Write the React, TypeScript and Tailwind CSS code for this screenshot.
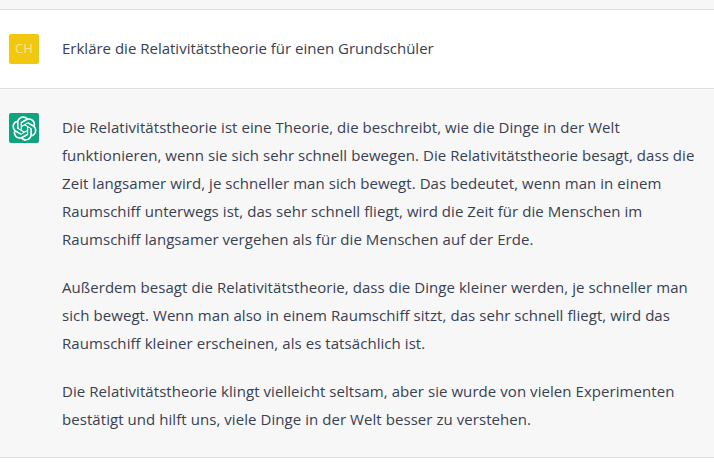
import React from "react";

const LOGO =
  "M37.5324 16.8707C37.9808 15.5241 38.1363 14.0974 37.9886 12.6859C37.8409 11.2744 37.3934 9.91076 36.676 8.68622C35.6126 6.83404 33.9882 5.3676 32.0373 4.4985C30.0864 3.62941 27.9098 3.40259 25.8215 3.85078C24.8796 2.7893 23.7219 1.94125 22.4257 1.36341C21.1295 0.785575 19.7249 0.491269 18.3058 0.500197C16.1708 0.495044 14.0893 1.16803 12.3614 2.42214C10.6335 3.67624 9.34853 5.44666 8.6917 7.47815C7.30085 7.76286 5.98686 8.3414 4.8377 9.17505C3.68854 10.0087 2.73073 11.0782 2.02839 12.312C0.956464 14.1591 0.498905 16.2988 0.721698 18.4228C0.944492 20.5467 1.83612 22.5449 3.268 24.1293C2.81966 25.4759 2.66413 26.9026 2.81182 28.3141C2.95951 29.7256 3.40701 31.0892 4.12437 32.3138C5.18791 34.1659 6.8123 35.6322 8.76321 36.5013C10.7141 37.3704 12.8907 37.5973 14.9789 37.1492C15.9208 38.2107 17.0786 39.0587 18.3747 39.6366C19.6709 40.2144 21.0755 40.5087 22.4946 40.4998C24.6307 40.5054 26.7133 39.8321 28.4418 38.5772C30.1704 37.3223 31.4556 35.5506 32.1119 33.5179C33.5027 33.2332 34.8167 32.6547 35.9659 31.821C37.115 30.9874 38.0728 29.9178 38.7752 28.684C39.8458 26.8371 40.3023 24.6979 40.0789 22.5748C39.8556 20.4517 38.9639 18.4544 37.5324 16.8707ZM22.4978 37.8849C20.7443 37.8874 19.0459 37.2733 17.6994 36.1501C17.7601 36.117 17.8666 36.0586 17.936 36.0161L25.9004 31.4156C26.1003 31.3019 26.2663 31.137 26.3813 30.9378C26.4964 30.7386 26.5563 30.5124 26.5549 30.2825V19.0542L29.9213 20.998C29.9389 21.0068 29.9541 21.0198 29.9656 21.0359C29.977 21.052 29.9842 21.0707 29.9867 21.0902V30.3889C29.9842 32.375 29.1946 34.2791 27.7909 35.6841C26.3872 37.0892 24.4838 37.8806 22.4978 37.8849ZM6.39227 31.0064C5.51397 29.4888 5.19742 27.7107 5.49804 25.9832C5.55718 26.0187 5.66048 26.0818 5.73461 26.1244L13.699 30.7248C13.8975 30.8408 14.1233 30.902 14.3532 30.902C14.583 30.902 14.8088 30.8408 15.0073 30.7248L24.731 25.1103V28.9979C24.7321 29.0177 24.7283 29.0376 24.7199 29.0556C24.7115 29.0736 24.6988 29.0893 24.6829 29.1012L16.6317 33.7497C14.9096 34.7416 12.8643 35.0097 10.9447 34.4954C9.02506 33.9811 7.38785 32.7263 6.39227 31.0064ZM4.29707 13.6194C5.17156 12.0998 6.55279 10.9364 8.19885 10.3327C8.19885 10.4013 8.19491 10.5228 8.19491 10.6071V19.808C8.19351 20.0378 8.25334 20.2638 8.36823 20.4629C8.48312 20.6619 8.64893 20.8267 8.84863 20.9404L18.5723 26.5542L15.206 28.4979C15.1894 28.5089 15.1703 28.5155 15.1505 28.5173C15.1307 28.5191 15.1107 28.516 15.0924 28.5082L7.04046 23.8557C5.32135 22.8601 4.06716 21.2235 3.55289 19.3046C3.03862 17.3858 3.30624 15.3413 4.29707 13.6194ZM31.955 20.0556L22.2312 14.4411L25.5976 12.4981C25.6142 12.4872 25.6333 12.4805 25.6531 12.4787C25.6729 12.4769 25.6928 12.4801 25.7111 12.4879L33.7631 17.1364C34.9967 17.849 36.0017 18.8982 36.6606 20.1613C37.3194 21.4244 37.6047 22.849 37.4832 24.2684C37.3617 25.6878 36.8382 27.0432 35.9743 28.1759C35.1103 29.3086 33.9415 30.1717 32.6047 30.6641C32.6047 30.5947 32.6047 30.4733 32.6047 30.3889V21.188C32.6066 20.9586 32.5474 20.7328 32.4332 20.5338C32.319 20.3348 32.154 20.1698 31.955 20.0556ZM35.3055 15.0128C35.2464 14.9765 35.1431 14.9142 35.069 14.8717L27.1045 10.2712C26.906 10.1554 26.6803 10.0943 26.4504 10.0943C26.2206 10.0943 25.9948 10.1554 25.7963 10.2712L16.0726 15.8858V11.9982C16.0715 11.9783 16.0753 11.9585 16.0837 11.9405C16.0921 11.9225 16.1048 11.9068 16.1207 11.8949L24.1719 7.25025C25.4053 6.53903 26.8158 6.19376 28.2383 6.25482C29.6608 6.31589 31.0364 6.78077 32.2044 7.59508C33.3723 8.40939 34.2842 9.53945 34.8334 10.8531C35.3826 12.1667 35.5464 13.6095 35.3055 15.0128ZM14.2424 21.9419L10.8752 19.9981C10.8576 19.9893 10.8423 19.9763 10.8309 19.9602C10.8195 19.9441 10.8122 19.9254 10.8098 19.9058V10.6071C10.8107 9.18295 11.2173 7.78848 11.9819 6.58696C12.7466 5.38544 13.8377 4.42659 15.1275 3.82264C16.4173 3.21869 17.8524 2.99464 19.2649 3.1767C20.6775 3.35876 22.0089 3.93941 23.1034 4.85067C23.0427 4.88379 22.937 4.94215 22.8668 4.98473L14.9024 9.58517C14.7025 9.69878 14.5366 9.86356 14.4215 10.0626C14.3065 10.2616 14.2466 10.4877 14.2479 10.7175L14.2424 21.9419ZM16.071 17.9991L20.4018 15.4978L24.7325 17.9975V22.9985L20.4018 25.4983L16.071 22.9985V17.9991Z";

const Line = ({ children }: { children: string }) => (
  <div className="whitespace-nowrap">{children}</div>
);

export default function App() {
  return (
    <div className="h-[474px] w-[714px] overflow-hidden bg-white font-['Open_Sans',sans-serif] text-[15px] text-[#374151]">
      <div className="h-[10px] border-b border-[#e0e0e2] bg-[#f7f7f8]" />

      <div className="flex h-[79px] gap-[23px] border-b border-[#e0e0e2] pl-[9px] pt-[24px]">
        <div className="flex h-[30px] w-[30px] items-center justify-center rounded-[2px] bg-[#f2c80f] text-[13px] text-[#f9e58c]">
          CH
        </div>
        <div className="leading-[28px]">Erkläre die Relativitätstheorie für einen Grundschüler</div>
      </div>

      <div className="flex h-[369px] gap-[23px] border-b border-[#e0e0e2] bg-[#f7f7f8] pl-[9px] pt-[24px]">
        <div className="flex h-[30px] w-[30px] shrink-0 items-center justify-center rounded-[2px] bg-[#10a37f]">
          <svg width="25" height="25" viewBox="0 0 41 41" fill="white">
            <path d={LOGO} />
          </svg>
        </div>
        <div className="flex flex-col gap-[20px] leading-[28px] tracking-[0.06px]">
          <div>
            <Line>Die Relativitätstheorie ist eine Theorie, die beschreibt, wie die Dinge in der Welt</Line>
            <Line>funktionieren, wenn sie sich sehr schnell bewegen. Die Relativitätstheorie besagt, dass die</Line>
            <Line>Zeit langsamer wird, je schneller man sich bewegt. Das bedeutet, wenn man in einem</Line>
            <Line>Raumschiff unterwegs ist, das sehr schnell fliegt, wird die Zeit für die Menschen im</Line>
            <Line>Raumschiff langsamer vergehen als für die Menschen auf der Erde.</Line>
          </div>
          <div>
            <Line>Außerdem besagt die Relativitätstheorie, dass die Dinge kleiner werden, je schneller man</Line>
            <Line>sich bewegt. Wenn man also in einem Raumschiff sitzt, das sehr schnell fliegt, wird das</Line>
            <Line>Raumschiff kleiner erscheinen, als es tatsächlich ist.</Line>
          </div>
          <div>
            <Line>Die Relativitätstheorie klingt vielleicht seltsam, aber sie wurde von vielen Experimenten</Line>
            <Line>bestätigt und hilft uns, viele Dinge in der Welt besser zu verstehen.</Line>
          </div>
        </div>
      </div>
    </div>
  );
}
